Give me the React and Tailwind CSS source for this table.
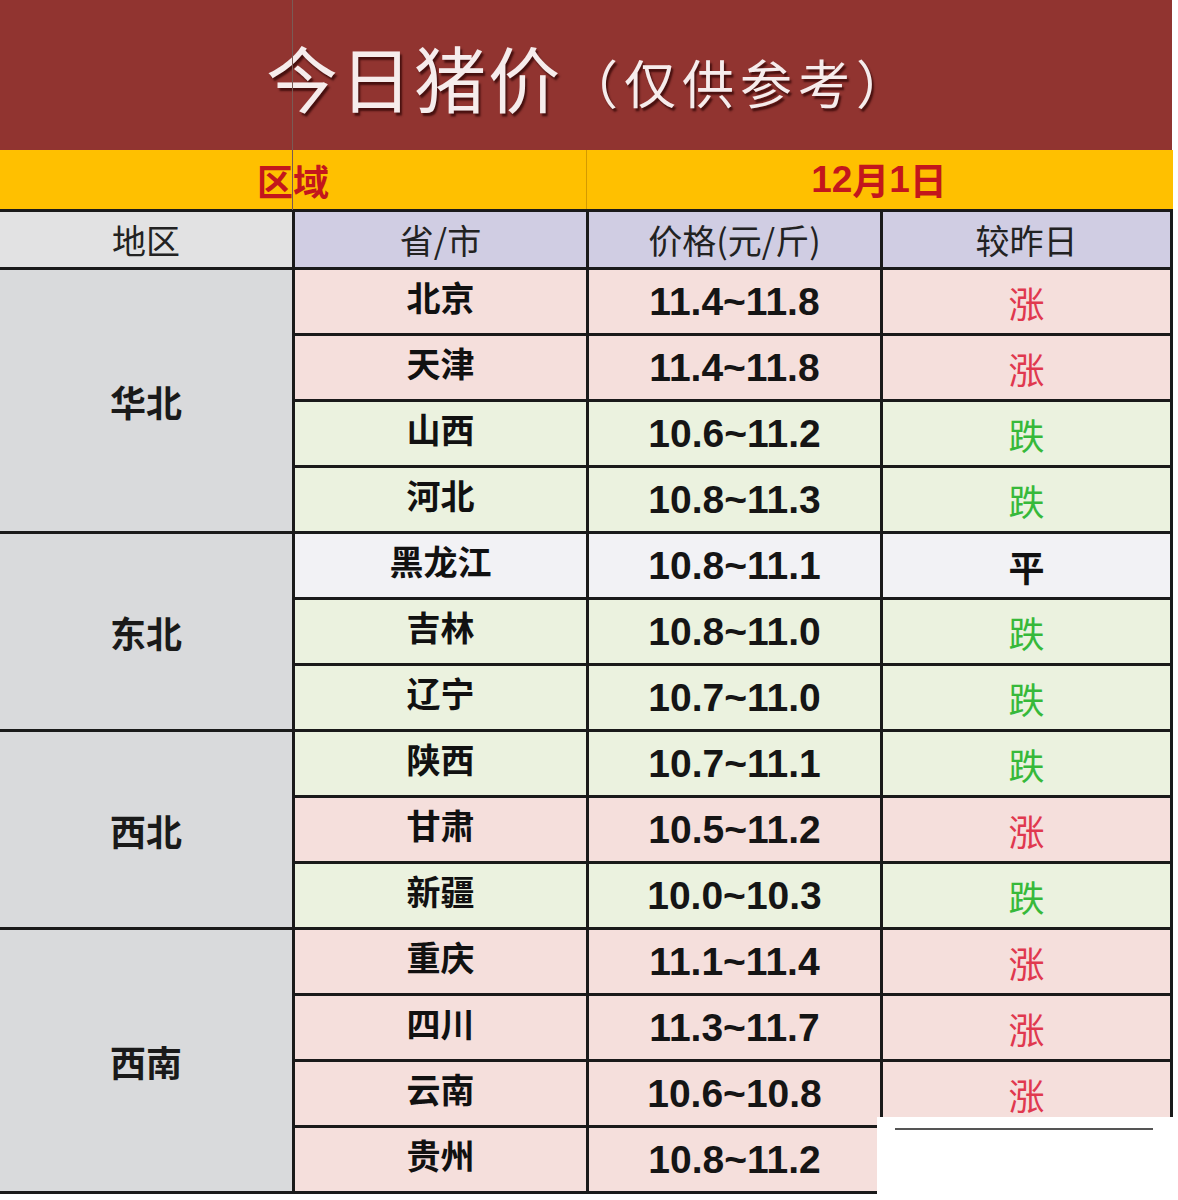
import React from "react";

const CJK = "font-['Noto_Sans_CJK_SC','Noto_Sans_CJK_JP',sans-serif]";
const NUM = "font-['Liberation_Sans',Arial,sans-serif]";

const PINK = "bg-[#f5dfdc]";
const GREEN = "bg-[#ebf2df]";
const WHITE = "bg-[#f2f2f5]";

const groups = [
  {
    name: "华北",
    span: "row-span-4",
    items: [
      ["北京", "11.4~11.8", "涨"],
      ["天津", "11.4~11.8", "涨"],
      ["山西", "10.6~11.2", "跌"],
      ["河北", "10.8~11.3", "跌"],
    ],
  },
  {
    name: "东北",
    span: "row-span-3",
    items: [
      ["黑龙江", "10.8~11.1", "平"],
      ["吉林", "10.8~11.0", "跌"],
      ["辽宁", "10.7~11.0", "跌"],
    ],
  },
  {
    name: "西北",
    span: "row-span-3",
    items: [
      ["陕西", "10.7~11.1", "跌"],
      ["甘肃", "10.5~11.2", "涨"],
      ["新疆", "10.0~10.3", "跌"],
    ],
  },
  {
    name: "西南",
    span: "row-span-4",
    items: [
      ["重庆", "11.1~11.4", "涨"],
      ["四川", "11.3~11.7", "涨"],
      ["云南", "10.6~10.8", "涨"],
      ["贵州", "10.8~11.2", "涨"],
    ],
  },
];

function bgFor(t) {
  if (t === "涨") return PINK;
  if (t === "跌") return GREEN;
  return WHITE;
}

function colorFor(t) {
  if (t === "涨") return "text-[#e0384f] font-normal";
  if (t === "跌") return "text-[#37b93a] font-normal";
  return "text-[#111] font-bold";
}

export default function App() {
  return (
    <div className="relative w-[1178px] h-[1200px] bg-white overflow-hidden">
      {/* Title */}
      <div className="w-[1172px] h-[150px] bg-[#913430] flex items-center pl-[266px] pt-[2px]">
        <span
          className={`${CJK} text-[72px] leading-none font-normal text-[#f6ecec] tracking-[2px] [text-shadow:2px_3px_2px_rgba(40,0,0,0.7)]`}
        >
          今日猪价
        </span>
        <span
          className={`${CJK} text-[52px] leading-none font-normal text-[#f6ecec] ml-[4px] mt-[12px] tracking-[6px] [text-shadow:2px_3px_2px_rgba(40,0,0,0.7)]`}
        >
          （仅供参考）
        </span>
      </div>

      {/* Yellow row */}
      <div className="w-[1173px] h-[62px] bg-[#ffc000] border-b-[3px] border-[#1a1a1a] grid grid-cols-[587px_586px]">
        <div
          className={`${CJK} border-r border-[#d49a00] flex items-center justify-center text-[36px] font-bold text-[#c3161c] leading-none`}
        >
          区域
        </div>
        <div
          className={`flex items-center justify-center text-[37px] font-bold text-[#c3161c] leading-none pr-[2px]`}
        >
          <span className={NUM}>12</span>
          <span className={CJK}>月</span>
          <span className={NUM}>1</span>
          <span className={CJK}>日</span>
        </div>
      </div>

      {/* Header row */}
      <div
        className={`${CJK} w-[1173px] h-[58px] grid grid-cols-[295px_294px_294px_290px] text-[34px] text-[#222] leading-none`}
      >
        <div className="bg-[#e2e2e3] border-r-[3px] border-b-[3px] border-[#1a1a1a] flex items-center justify-center">
          地区
        </div>
        <div className="bg-[#d0cde3] border-r-[3px] border-b-[3px] border-[#1a1a1a] flex items-center justify-center">
          省/市
        </div>
        <div className="bg-[#d0cde3] border-r-[3px] border-b-[3px] border-[#1a1a1a] flex items-center justify-center">
          价格(元/斤)
        </div>
        <div className="bg-[#d0cde3] border-r-[3px] border-b-[3px] border-[#1a1a1a] flex items-center justify-center">
          较昨日
        </div>
      </div>

      {/* Body */}
      <div className="w-[1173px] grid grid-cols-[295px_294px_294px_290px] auto-rows-[66px]">
        {groups.map((g) => (
          <React.Fragment key={g.name}>
            <div
              className={`${g.span} ${CJK} bg-[#d9dadc] border-r-[3px] border-b-[3px] border-[#1a1a1a] flex items-center justify-center text-[36px] font-bold text-[#1a1a1a] leading-none`}
            >
              {g.name}
            </div>
            {g.items.map(([p, price, t]) => {
              const bg = bgFor(t);
              return (
                <React.Fragment key={p}>
                  <div
                    className={`${bg} ${CJK} border-r-[3px] border-b-[3px] border-[#1a1a1a] flex items-center justify-center pb-[10px] text-[34px] font-bold text-[#111] leading-none`}
                  >
                    {p}
                  </div>
                  <div
                    className={`${bg} ${NUM} border-r-[3px] border-b-[3px] border-[#1a1a1a] flex items-center justify-center text-[39px] font-bold text-[#151515] leading-none`}
                  >
                    {price}
                  </div>
                  <div
                    className={`${bg} ${CJK} border-r-[3px] border-b-[3px] border-[#1a1a1a] flex items-center justify-center text-[36px] leading-none ${colorFor(t)}`}
                  >
                    {t}
                  </div>
                </React.Fragment>
              );
            })}
          </React.Fragment>
        ))}
      </div>

      {/* thin spreadsheet grid line over title/yellow */}
      <div className="absolute left-[292px] top-0 w-px h-[210px] bg-[#7a5a55]" />

      {/* white watermark patch bottom-right */}
      <div className="absolute left-[877px] top-[1117px] w-[298px] h-[80px] bg-white">
        <div className="absolute left-[18px] top-[11px] w-[258px] h-[2px] bg-[#2a2a2a] opacity-80" />
      </div>
    </div>
  );
}
